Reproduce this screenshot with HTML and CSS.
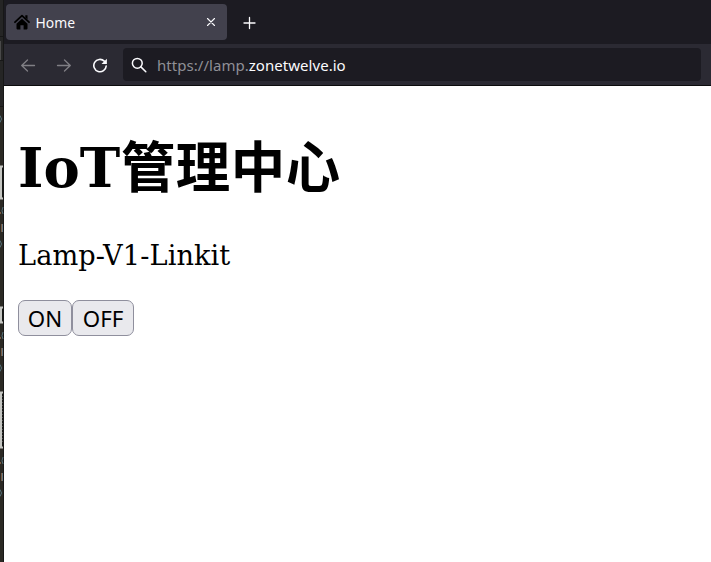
FILE: index.html
```html
<!DOCTYPE html>
<html lang="zh-Hant">
<head>
<meta charset="utf-8">
<title>Home</title>
<link rel="stylesheet" href="styles.css">
</head>
<body>
<svg class="backdrop" width="4" height="562" viewBox="0 0 4 562" aria-hidden="true">
  <path fill="#252525" d="M0 0h4v562H0z"/>
  <path fill="#2b2924" d="M0 107h3v455H0z"/>
  <path fill="#171717" d="M0 36h3v1H0zM0 60h3v1H0zM0 106h3v1H0zM3 0h1v562H3z"/>
  <path fill="#494949" d="M0 41h1v19H0z"/>
  <path fill="#171917" d="M1 168h2v29H1zM1 309h2v12H1zM1 394h2v53H1z"/>
  <path fill="none" stroke="#c5c6c2" stroke-width="2" d="M3 166.500H1V198.500H3M3 307.500H1V322.500H3M3 392.500H1V447.500H3"/>
  <path fill="none" stroke="#555" stroke-dasharray="1 2" d="M2.500 396v48"/>
  <path fill="none" stroke="#55717a" d="M0 115.500q3 3.500 0 7M3 207q-2 4 0 7M0 240.500q3 3.500 0 7M3 332q-2 4 0 7M0 364.500q3 3.500 0 7M3 457q-2 4 0 7M0 489.500q3 3.500 0 7"/>
  <path fill="#795c45" d="M0 212h1v2H0zM1 224h1v8H1zM0 337h1v2H0zM1 348h1v8H1zM0 462h1v2H0zM1 473h1v8H1z"/>
  <path fill="#667780" d="M2 224h1v8H2zM2 348h1v8H2zM2 473h1v8H2z"/>
</svg>
<div class="window">
  <header class="tabs">
    <div class="tab">
      <svg class="home" width="16" height="16" viewBox="0 0 16 16"><path fill="none" stroke="#000" stroke-width="1.800" stroke-linecap="round" stroke-linejoin="round" d="M1 8.200 8 1.700l7 6.500"/><path d="M11.300 1.300h2.200v4.200l-2.200-2zM8 4.800l5.500 5v4.800a.8.800 0 0 1-.8.800H9.600v-4.200H6.400v4.200H3.300a.8.800 0 0 1-.8-.8V9.800z"/></svg>
      <span class="title">Home</span>
      <svg class="close" width="10" height="10" viewBox="0 0 10 10"><path d="m1.500 1.500 7 7m0-7-7 7"/></svg>
    </div>
    <svg class="new" width="14" height="14" viewBox="0 0 14 14"><path d="M6.500 1.500v11M1 7h11"/></svg>
  </header>
  <nav class="toolbar">
    <svg class="arrow" width="16" height="16" viewBox="0 0 16 16"><path d="M14.500 8.500H1.700m5.800-5.500L1.700 8.500l5.800 5.500"/></svg>
    <svg class="arrow" width="16" height="16" viewBox="0 0 16 16"><path d="M1.500 8.500h12.800M8.500 3l5.800 5.500L8.500 14"/></svg>
    <svg class="reload" width="16" height="16" viewBox="0 0 16 16"><path d="M12.300 4.100A6.200 6.200 0 1 0 14.200 9"/><path class="tip" d="M14.900 1.700v5.400H9.500z"/></svg>
    <div class="address">
      <svg class="search" width="16" height="16" viewBox="0 0 16 16"><circle cx="6.300" cy="6.300" r="4.900"/><path d="m9.900 9.900 4.900 4.900"/></svg>
      <span class="url"><span class="sub">https://lamp.</span><span class="domain">zonetwelve.io</span></span>
    </div>
  </nav>
  <main class="page">
    <h1>IoT<span class="cjk">管理中心</span></h1>
    <p>Lamp-V1-Linkit</p>
    <div class="controls"><button>ON</button><button>OFF</button></div>
  </main>
</div>
</body>
</html>
```
FILE: styles.css
```css
* { box-sizing: border-box; }
body {
  margin: 0;
  height: 562px;
  display: flex;
  overflow: hidden;
  background: #fff;
}
svg { display: block; flex: none; }
.window { flex: 1; min-width: 0; }
.tabs {
  height: 44px;
  padding: 4px 2px;
  display: flex;
  align-items: center;
  background: #1c1b22;
}
.tab {
  width: 221px;
  height: 36px;
  padding: 0 11px 0 8px;
  display: flex;
  align-items: center;
  border-radius: 4px;
  background: #42414d;
  color: #fbfbfe;
}
.title {
  flex: 1;
  margin-left: 5.5px;
  padding-top: 2px;
  font: 13.9px/20px "Noto Sans", sans-serif;
}
.close, .new, .arrow, .reload, .search {
  fill: none;
  stroke: #fbfbfe;
  stroke-width: 1.3;
  stroke-linecap: round;
  stroke-linejoin: round;
}
.close { stroke-width: 1.1; }
.new { margin-left: 16px; margin-top: 1px; }
.toolbar {
  height: 42px;
  padding: 4px 10px 4px 16px;
  display: flex;
  align-items: center;
  gap: 20px;
  background: #2b2a33;
  border-bottom: 1px solid #0c0c0d;
}
.arrow { stroke: #807f85; }
.reload { stroke-width: 1.6; }
.reload .tip { fill: #fbfbfe; stroke: none; }
.address {
  flex: 1;
  height: 33px;
  margin-left: -5px;
  padding-left: 8px;
  display: flex;
  align-items: center;
  border-radius: 4px;
  background: #1c1b22;
}
.search { stroke-width: 1.5; }
.url {
  margin-left: 10px;
  font: 15px/20px "Noto Sans", sans-serif;
  letter-spacing: 0.04px;
  white-space: nowrap;
}
.sub { color: #8f8f96; }
.domain { color: #fbfbfe; }
.page {
  padding: 50px 14px 0;
  color: #000;
  font: 27.2px/32px "DejaVu Serif", "Noto Sans CJK TC", serif;
}
h1 {
  margin: 0;
  font-size: 54.4px;
  line-height: 64px;
}
.cjk {
  margin-left: 0.6px;
  letter-spacing: 0.6px;
}
p {
  margin: 40px 0 28px;
  letter-spacing: 0.09px;
}
.controls { display: flex; }
button {
  width: 54px;
  height: 36px;
  padding: 2px 0 0;
  border: 1px solid #8f8f9d;
  border-radius: 7px;
  background: #e9e9ed;
  color: #000;
  font: 22.3px/32px "Noto Sans", sans-serif;
}
button + button { width: 62px; }
```
